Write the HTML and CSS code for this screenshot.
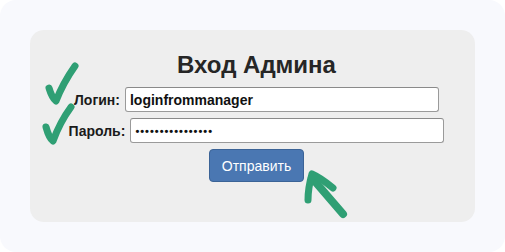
FILE: index.html
```html
<!DOCTYPE html>
<html lang="ru">
<head>
<meta charset="utf-8">
<link rel="stylesheet" href="styles.css">
</head>
<body>
<div class="frame">
  <div class="card">
    <h2 class="title">Вход Админа</h2>
    <form class="form">
      <div class="row">
        <label class="label" for="login">Логин:</label>
        <input class="field" id="login" type="text" value="loginfrommanager">
      </div>
      <div class="row">
        <label class="label" for="pass">Пароль:</label>
        <input class="field field-pass" id="pass" type="password" value="abcdefghijklmnop">
      </div>
      <div class="row">
        <button class="submit" type="button">Отправить</button>
      </div>
    </form>
  </div>
  <svg class="marks" width="505" height="252" viewBox="0 0 505 252">
    <g fill="none" stroke="#2f9f74" stroke-linecap="round" stroke-linejoin="round">
      <path d="M49 88 Q52 98 56 101 Q63 83 75 66" stroke-width="7"/>
      <path d="M46 127 Q49 138 53 141 Q60 122 71 107" stroke-width="7"/>
      <path d="M343 214 L312 178" stroke-width="8"/>
      <path d="M333 188 Q321 178 312 174 Q308 188 308 200" stroke-width="7"/>
    </g>
  </svg>
</div>
</body>
</html>
```
FILE: styles.css
```css
html, body {
  margin: 0;
  padding: 0;
  background: #ffffff;
}
.frame {
  position: relative;
  width: 505px;
  height: 252px;
  box-sizing: border-box;
  padding: 30px;
  border-radius: 16px;
  background: #f8f9fd;
  font-family: "Liberation Sans", Arial, sans-serif;
}
.card {
  height: 192px;
  box-sizing: border-box;
  padding-top: 21px;
  padding-left: 8px;
  background: #eeeeee;
  border-radius: 14px;
}
.title {
  margin: 0 0 8px;
  text-align: center;
  font-size: 24px;
  font-weight: bold;
  color: #262626;
  line-height: 28px;
}
.form {
  display: flex;
  flex-direction: column;
  gap: 6px;
}
.row {
  display: flex;
  justify-content: center;
  align-items: center;
  gap: 5px;
}
.label {
  font-size: 14px;
  font-weight: bold;
  color: #1a1a1a;
}
.field {
  width: 314px;
  height: 25px;
  box-sizing: border-box;
  margin: 0;
  padding: 0 4px;
  border: 1px solid #9a9a9a;
  border-top-color: #8a8a8a;
  border-radius: 3px;
  background: #ffffff;
  font-family: "Liberation Sans", Arial, sans-serif;
  font-size: 14px;
  font-weight: bold;
  color: #111111;
}
.field-pass {
  font-size: 11px;
  letter-spacing: 1px;
}
.submit {
  width: 95px;
  height: 33px;
  margin: 0;
  border: 1px solid #3b6396;
  border-radius: 4px;
  background: #4a77b2;
  color: #ffffff;
  font-family: "Liberation Sans", Arial, sans-serif;
  font-size: 14px;
}
.marks {
  position: absolute;
  left: 0;
  top: 0;
  pointer-events: none;
}
```
